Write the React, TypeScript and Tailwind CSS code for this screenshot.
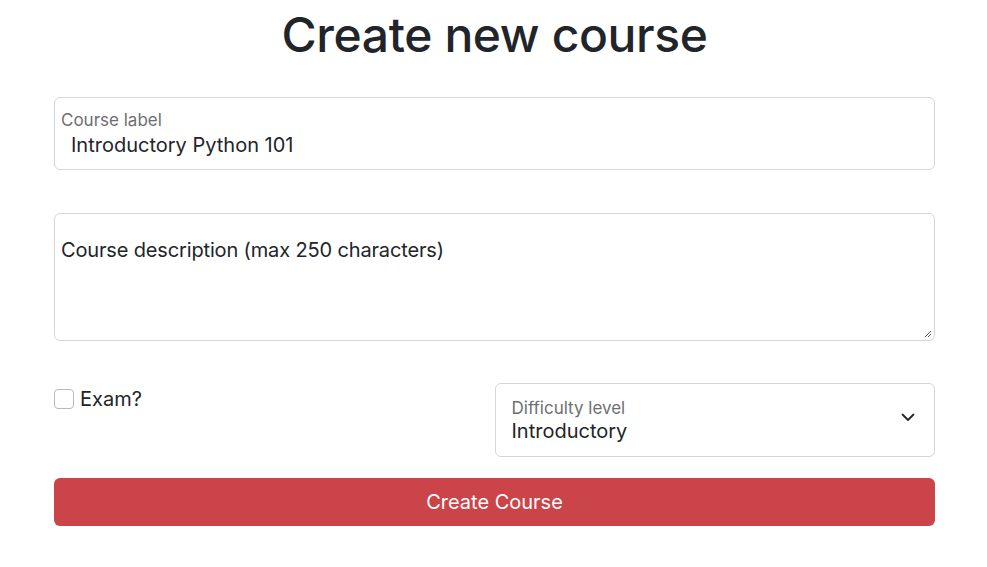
import React from "react";

export default function App() {
  return (
    <div className="min-h-[567px] w-full bg-white text-[#212529]" style={{ fontFamily: "Inter, 'Liberation Sans', sans-serif" }}>
      <div className="ml-[54px] w-[881px] pt-[6px]">
        <h1 className="text-center text-[48px] font-medium leading-[58px] tracking-[-0.4px]">Create new course</h1>

        <div className="mt-[33px] flex h-[73px] flex-col rounded-[6px] border border-[#d4d6d9] px-[6px] pt-[12px]">
          <span className="text-[17px] leading-[20px] text-[#6c6f72]">Course label</span>
          <span className="pl-[10px] pt-[2px] text-[20px] leading-[26px]">Introductory Python 101</span>
        </div>

        <div className="relative mt-[43px] h-[128px] rounded-[6px] border border-[#d4d6d9] px-[6px] pt-[24px]">
          <span className="text-[20px] leading-[24px] tracking-[-0.15px]">Course description (max 250 characters)</span>
          <svg className="absolute bottom-[2px] right-[2px]" width="9" height="9" viewBox="0 0 9 9">
            <path d="M8 2 L2 8 M8 5 L5 8" stroke="#555" strokeWidth="1" />
          </svg>
        </div>

        <div className="mt-[42px] grid grid-cols-2">
          <div className="flex items-start gap-[6px] pt-[6px]">
            <span className="h-[20px] w-[20px] rounded-[4px] border border-[#b8babd] bg-white" />
            <span className="text-[20px] leading-[20px]">Exam?</span>
          </div>
          <div className="flex h-[74px] items-center justify-between rounded-[6px] border border-[#d4d6d9] pl-[16px] pr-[19px]">
            <div className="flex flex-col pt-[1px]">
              <span className="text-[17px] leading-[20px] text-[#6c6f72]">Difficulty level</span>
              <span className="text-[20px] leading-[26px]">Introductory</span>
            </div>
            <svg width="14" height="9" viewBox="0 0 14 9" className="mb-[6px]">
              <path d="M1.5 1.5 L7 7 L12.5 1.5" fill="none" stroke="#212529" strokeWidth="1.8" strokeLinecap="round" strokeLinejoin="round" />
            </svg>
          </div>
        </div>

        <button className="mt-[21px] flex h-[48px] w-full items-center justify-center rounded-[6px] bg-[#cb444a] text-[20px] text-white">
          Create Course
        </button>
      </div>
    </div>
  );
}
